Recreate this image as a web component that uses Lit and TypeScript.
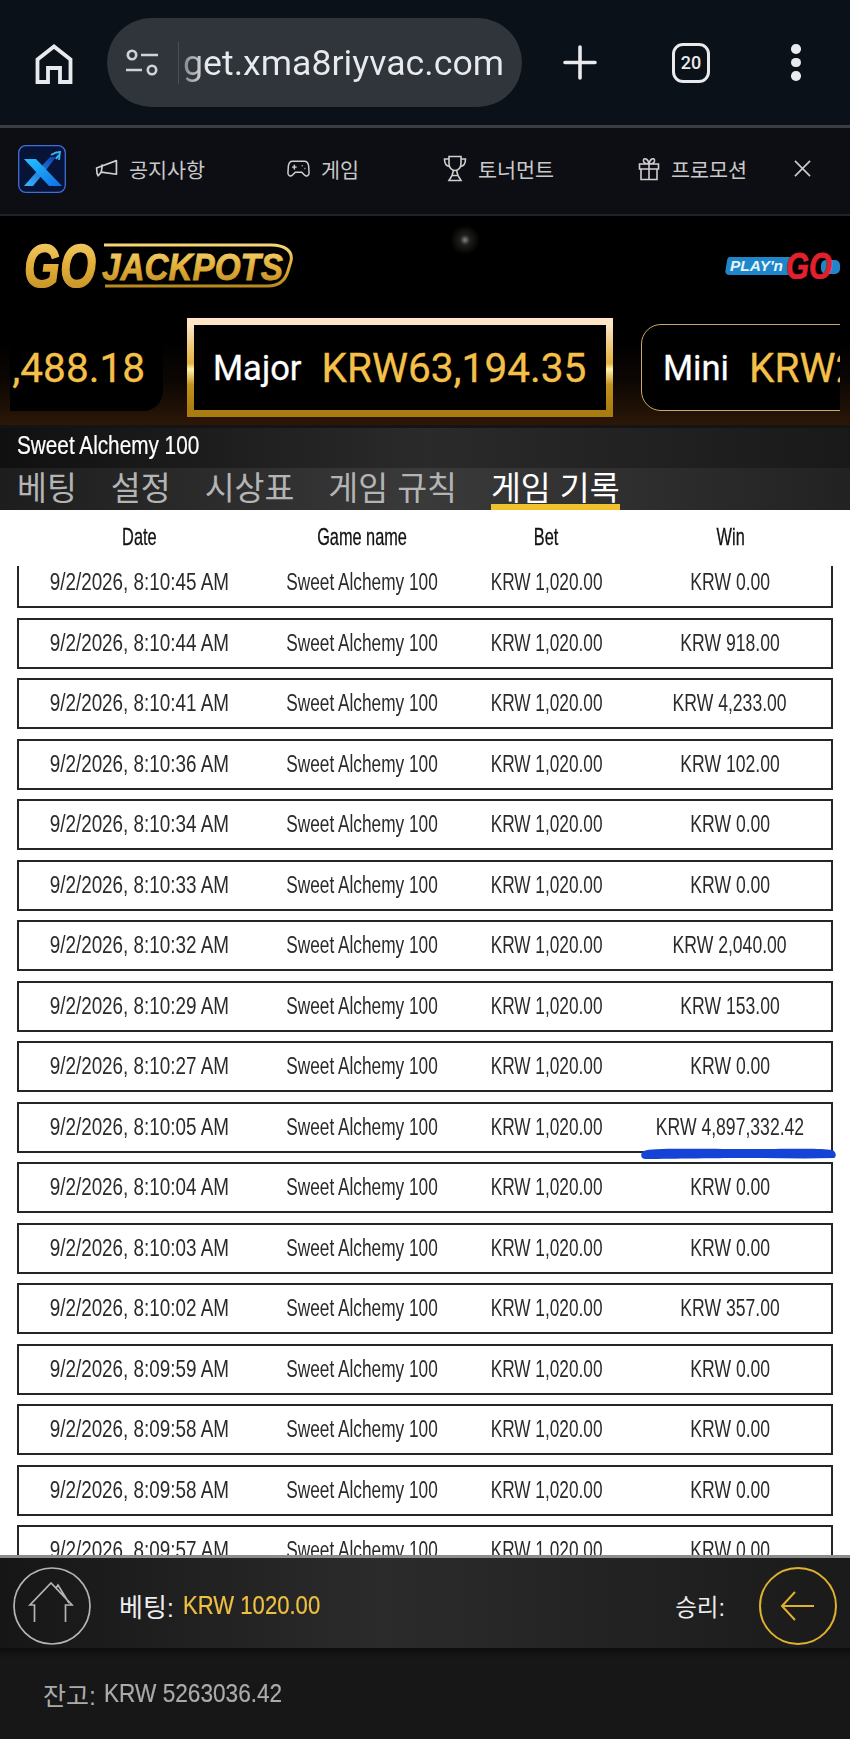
import { LitElement, html, css, svg } from 'lit';
import { customElement } from 'lit/decorators.js';

const BET = "KRW 1,020.00";
const GAME = "Sweet Alchemy 100";

const ROWS = [
  ["9/2/2026, 8:10:45 AM", "KRW 0.00"],
  ["9/2/2026, 8:10:44 AM", "KRW 918.00"],
  ["9/2/2026, 8:10:41 AM", "KRW 4,233.00"],
  ["9/2/2026, 8:10:36 AM", "KRW 102.00"],
  ["9/2/2026, 8:10:34 AM", "KRW 0.00"],
  ["9/2/2026, 8:10:33 AM", "KRW 0.00"],
  ["9/2/2026, 8:10:32 AM", "KRW 2,040.00"],
  ["9/2/2026, 8:10:29 AM", "KRW 153.00"],
  ["9/2/2026, 8:10:27 AM", "KRW 0.00"],
  ["9/2/2026, 8:10:05 AM", "KRW 4,897,332.42"],
  ["9/2/2026, 8:10:04 AM", "KRW 0.00"],
  ["9/2/2026, 8:10:03 AM", "KRW 0.00"],
  ["9/2/2026, 8:10:02 AM", "KRW 357.00"],
  ["9/2/2026, 8:09:59 AM", "KRW 0.00"],
  ["9/2/2026, 8:09:58 AM", "KRW 0.00"],
  ["9/2/2026, 8:09:58 AM", "KRW 0.00"],
  ["9/2/2026, 8:09:57 AM", "KRW 0.00"],
];

const HOME = svg`<svg class="i-home" viewBox="0 0 38 40" fill="none" stroke="#e8eaed" stroke-width="3.800"><path d="M2.500 38V15.500L19 2.500l16.500 13V38H25V24H13v14z"/></svg>`;
const TUNE = svg`<svg class="i-tune" viewBox="0 0 32 27" fill="none" stroke="#cfd2d6" stroke-width="2.600"><circle cx="6" cy="6" r="4.200"/><path d="M15 6h17M0 21h16"/><circle cx="26" cy="21" r="4.200"/></svg>`;
const PLUS = svg`<svg class="i-plus" viewBox="0 0 34 35" stroke="#e8eaed" stroke-width="3.600" stroke-linecap="round"><path d="M17 2v31M2 17.500h30"/></svg>`;

const MEGAPHONE = svg`<svg class="i-nav" viewBox="0 0 22 20" fill="none" stroke="#cfcfcf" stroke-width="1.600" stroke-linejoin="round"><path d="M20.500 2.500v13L6 13.500 3 17l-1-2-.5-5.500z"/><path d="M6 13.500 7 6"/></svg>`;
const PAD = svg`<svg class="i-nav" viewBox="0 0 25 20" fill="none" stroke="#cfcfcf" stroke-width="1.600"><path d="M6 2h13c3 0 4 2 4.500 5l.5 8c0 3-3 4-5 2l-3-3H9l-3 3c-2 2-5 1-5-2l.5-8C2 4 3 2 6 2z"/><path d="M5.500 8.500h5M8 6v5M16 7h1M19 10h1"/></svg>`;
const TROPHY = svg`<svg class="i-trophy" viewBox="0 0 24 27" fill="none" stroke="#cfcfcf" stroke-width="1.600"><path d="M6 1.500h12v7c0 4-2.500 7-6 7s-6-3-6-7z"/><path d="M6 4H1.500c0 4 1.500 7 5 7.500M18 4h4.500c0 4-1.500 7-5 7.500M10.500 15.500l-1.500 5h6l-1.500-5M6 25.500h12l-3-5H9z"/></svg>`;
const GIFT = svg`<svg class="i-gift" viewBox="0 0 22 24" fill="none" stroke="#cfcfcf" stroke-width="1.600"><path d="M1.500 7h19v5h-19zM3 12v10.500h16V12M11 7v15.500M11 7C7 7 5 5.500 5.500 3S10 1.500 11 7c1-5.500 5-6.500 5.500-4S15 7 11 7z"/></svg>`;
const CLOSE = svg`<svg class="i-close" viewBox="0 0 18 18" stroke="#c8c8c8" stroke-width="1.800"><path d="M1 1l16 16M17 1L1 17"/></svg>`;

const X_LOGO = svg`<svg class="x-logo" viewBox="0 0 48 48">
  <defs>
    <linearGradient id="xa" x1="0" y1="0" x2="1" y2="1"><stop offset="0" stop-color="#22c3ff"/><stop offset="1" stop-color="#0f6fe8"/></linearGradient>
    <linearGradient id="xb" x1="0" y1="1" x2="1" y2="0"><stop offset="0" stop-color="#38b7ff"/><stop offset="1" stop-color="#0d3fb0"/></linearGradient>
  </defs>
  <rect x=".7" y=".7" width="46.600" height="46.600" rx="7" fill="#071437" stroke="#3d6fd8" stroke-width="1.300"/>
  <path d="M6 41 21 24 32 12h6L25 29 15 41z" fill="url(#xb)"/>
  <path d="M6 14h12l26 27H31z" fill="url(#xa)"/>
  <path d="M33 10c3-2 6-3 9-3l-1 8M38 14c1-2 2-3 3-4" fill="none" stroke="#33b4f5" stroke-width="1.800"/>
</svg>`;

const JACKPOT_LOGO = svg`<svg class="gj-logo" viewBox="0 0 271 45">
  <defs>
    <linearGradient id="gold" x1="0" y1="0" x2="0" y2="1"><stop offset="0" stop-color="#f6d774"/><stop offset=".5" stop-color="#e2ad38"/><stop offset="1" stop-color="#b98a22"/></linearGradient>
  </defs>
  <path d="M81 2h167c14 0 22 6 20 16l-3 10c-3 10-9 15-20 15H68" fill="none" stroke="url(#gold)" stroke-width="3"/>
  <rect x="60" y="39" width="22" height="6" fill="#000"/>
  <text class="gj-go" x="1" y="44" textLength="72" lengthAdjust="spacingAndGlyphs" fill="url(#gold)" stroke="url(#gold)" stroke-width="1.500">GO</text>
  <text class="gj-word" x="79" y="37" textLength="181" lengthAdjust="spacingAndGlyphs" fill="url(#gold)" stroke="url(#gold)" stroke-width=".8">JACKPOTS</text>
</svg>`;

const PLAYNGO = svg`<svg class="png-logo" viewBox="0 0 115 27">
  <rect x="96" y="8" width="19" height="14" rx="5" fill="#1f87c9"/>
  <path d="M5 5h62v18H5C1 23 0 21 .500 18l1.500-9C2.500 6 3 5 5 5z" fill="#1f87c9"/>
  <text class="png-play" x="5" y="19" textLength="53" lengthAdjust="spacingAndGlyphs" fill="#e8f3fa">PLAY'n</text>
  <text class="png-go" x="61" y="26.500" textLength="46" lengthAdjust="spacingAndGlyphs" fill="#e2202e" stroke="#e2202e" stroke-width=".8">GO</text>
</svg>`;

const HOUSE = svg`<svg class="round" viewBox="0 0 78 78" fill="none" stroke="#b4b4b4" stroke-width="1.700"><ellipse cx="39" cy="39" rx="38" ry="38"/><path d="M21.500 55V38H17L38 16l21 22h-6.500v17M43 21l2-3 11 18"/></svg>`;
const BACK = svg`<svg class="round" viewBox="0 0 78 78" fill="none" stroke="#e0b12c" stroke-width="2"><ellipse cx="39" cy="39" rx="38" ry="38"/><path d="M23 39h32M36 25 23 39l13 14"/></svg>`;

const SCRIBBLE = svg`<svg class="scribble" viewBox="0 0 197 11" preserveAspectRatio="none"><path d="M4 3C12 0 40 1 100 1s80-1 92 1c4 1 5 7 2 8-30 1-60 0-90 0S20 11 6 11C0 11 0 5 4 3z" fill="#1443d6"/></svg>`;

@customElement('app-root')
export class AppRoot extends LitElement {
  static styles = css`
:host {
  display: block;
  width: 850px;
  height: 1739px;
  background: #fff;
  font-family: "Liberation Sans", "Noto Sans CJK KR", sans-serif;
  overflow: hidden;
}

.page {
  display: flex;
  flex-direction: column;
  height: 100%;
}

.browser {
  flex: none;
  height: 125px;
  box-sizing: border-box;
  background: #0b1118;
  display: flex;
  align-items: center;
  padding: 0 0 0 35px;
}

.i-home { width: 38px; height: 40px; margin-top: 2px; }

.url {
  width: 415px;
  height: 89px;
  margin: 0 0 0 34px;
  box-sizing: border-box;
  border-radius: 45px;
  background: #30353b;
  display: flex;
  align-items: center;
  padding-left: 19px;
}

.i-tune { width: 32px; height: 27px; flex: none; }

.url-text {
  margin-left: 20px;
  padding-left: 4px;
  border-left: 1px solid #4c5056;
  font: 400 35.700px Roboto, sans-serif;
  background: linear-gradient(90deg, #6f7276 0, #e8eaed 28px);
  -webkit-background-clip: text;
  background-clip: text;
  color: transparent;
  white-space: nowrap;
}

.i-plus { width: 34px; height: 35px; margin-left: 41px; }

.tabs-count {
  width: 38px;
  height: 40px;
  margin-left: 75px;
  box-sizing: border-box;
  border: 3.500px solid #e8eaed;
  border-radius: 11px;
  display: flex;
  align-items: center;
  justify-content: center;
  font: 500 18px Roboto, sans-serif;
  color: #e8eaed;
}

.dots {
  margin-left: 81px;
  display: flex;
  flex-direction: column;
  gap: 4px;
}

.dots span {
  width: 9.500px;
  height: 9.500px;
  border-radius: 50%;
  background: #e8eaed;
}

.divider {
  flex: none;
  height: 3px;
  background: #3b3d42;
}

.nav {
  flex: none;
  height: 88px;
  box-sizing: border-box;
  border-bottom: 2px solid #202228;
  background: #0d0e13;
  display: flex;
  align-items: center;
  padding: 0 0 5px 18px;
}

.x-logo { width: 48px; height: 48px; margin-right: 29px; flex: none; }

.nav-item {
  display: flex;
  align-items: center;
  gap: 11px;
  color: #c9c9c9;
  font-size: 20.700px;
  white-space: nowrap;
}

.nav-a { width: 192px; }
.nav-b { width: 156px; }
.nav-c { width: 195px; }
.nav-d { width: 156px; }

.i-nav { width: 23px; height: 21px; flex: none; }
.i-trophy { width: 24px; height: 27px; flex: none; }
.i-gift { width: 22px; height: 24px; flex: none; }
.i-close { width: 17px; height: 17px; }

.jackpots {
  flex: none;
  height: 209px;
  box-sizing: border-box;
  padding-top: 27px;
  background:
    radial-gradient(circle at 465px 24px, rgba(215, 215, 205, 0.6) 0, rgba(120, 120, 110, 0.25) 5px, transparent 15px),
    linear-gradient(180deg, #000 0, #000 60%, #0d0703 80%, #2c1707 100%);
}

.logos {
  height: 45px;
  display: flex;
  align-items: center;
  justify-content: space-between;
  padding: 0 10px 0 23px;
}

.gj-logo { width: 271px; height: 45px; }
.png-logo { width: 115px; height: 27px; }

.gj-go { font: italic 700 62px "Liberation Sans", sans-serif; }
.gj-word { font: italic 700 37px "Liberation Sans", sans-serif; }
.png-play { font: italic 700 15px "Liberation Sans", sans-serif; }
.png-go { font: italic 700 37px "Liberation Sans", sans-serif; }

.carousel {
  margin: 30px 10px 0;
  height: 99px;
  display: flex;
  align-items: center;
  overflow: hidden;
  font-family: Roboto, sans-serif;
}

.pill {
  flex: none;
  height: 87px;
  box-sizing: border-box;
  background: #000;
  display: flex;
  align-items: center;
}

.pill-left {
  width: 153px;
  justify-content: flex-end;
  padding-right: 18px;
  border-radius: 0 0 20px 0;
  margin-right: 24px;
}

.pill-right {
  width: 300px;
  margin-left: 28px;
  padding-left: 21px;
  border: 1px solid #c9a868;
  border-radius: 20px;
}

.major {
  flex: none;
  width: 426px;
  height: 99px;
  box-sizing: border-box;
  background: #000;
  border: 7px solid;
  border-image: linear-gradient(180deg, #ffe6c8 0, #e0b23c 45%, #fff2a8 52%, #c2911c 70%, #a97c10 100%) 1;
  display: flex;
  align-items: center;
  padding-left: 19px;
}

.label {
  color: #fff;
  font-size: 34.500px;
  margin-right: 20px;
  white-space: nowrap;
  -webkit-text-stroke: 0.3px #fff;
}

.value {
  color: #f5c04a;
  font-size: 40.600px;
  white-space: nowrap;
  -webkit-text-stroke: 0.3px #f5c04a;
}

.game-title {
  flex: none;
  height: 43px;
  box-sizing: border-box;
  padding: 0 0 5px 17px;
  background: linear-gradient(90deg, #101010, #2a2a2a 50%, #191919);
  border-top: 3px solid #141414;
  display: flex;
  align-items: center;
}

.title-text {
  display: inline-block;
  color: #fff;
  font-size: 25px;
  transform: scaleX(0.83);
  transform-origin: left center;
  white-space: nowrap;
  -webkit-text-stroke: 0.2px #fff;
}

.tabs {
  flex: none;
  height: 42px;
  box-sizing: border-box;
  padding-left: 17px;
  display: flex;
  gap: 34px;
  background: linear-gradient(90deg, #1d1d1d, #3a3a3a 50%, #222);
}

.tab {
  height: 42px;
  box-sizing: border-box;
  color: #b4b4b4;
  font-size: 32.500px;
  line-height: 43px;
  white-space: nowrap;
}

.tab.active {
  color: #fff;
  border-bottom: 6px solid #f2c12e;
}

.table-head {
  flex: none;
  height: 56px;
  box-sizing: border-box;
  padding-bottom: 2px;
  margin: 0 17px;
  display: grid;
  grid-template-columns: 244px 202px 166px 1fr;
  justify-items: center;
  align-items: center;
  background: #fff;
}

.head-cell {
  display: inline-block;
  font-size: 24px;
  color: #111;
  -webkit-text-stroke: 0.3px #111;
  transform: scaleX(0.68);
  white-space: nowrap;
}

.list {
  flex: 1;
  min-height: 0;
  overflow: hidden;
  padding: 0 17px;
  background: #fff;
}

.rows {
  display: flex;
  flex-direction: column;
  gap: 9.500px;
  margin-top: -9px;
}

.row {
  position: relative;
  flex: none;
  height: 51px;
  box-sizing: border-box;
  border: 2px solid #262626;
  display: grid;
  grid-template-columns: 241px 204px 165px 1fr;
  justify-items: center;
  align-items: center;
}

.cell {
  display: inline-block;
  font-size: 23px;
  color: #2a2a2a;
  transform: scaleX(0.75);
  white-space: nowrap;
}

.cell.date {
  transform: scaleX(0.82);
}

.cell.win {
  transform: scaleX(0.765);
}

.scribble {
  position: absolute;
  left: 621px;
  top: 44px;
  width: 197px;
  height: 11px;
}

.bet-bar {
  flex: none;
  height: 93px;
  box-sizing: border-box;
  border-top: 3px solid #8c8c8c;
  background: linear-gradient(90deg, #161616, #2b2b2b 45%, #1a1a1a);
  display: flex;
  align-items: center;
  padding: 5px 13px 0;
  color: #eee;
}

.round { width: 78px; height: 78px; flex: none; }

.bet-label {
  font-size: 26px;
  margin-left: 28px;
  white-space: nowrap;
}

.bet-value {
  display: inline-block;
  font-size: 26px;
  color: #f0c040;
  margin-left: 9px;
  transform: scaleX(0.85);
  transform-origin: left center;
  white-space: nowrap;
  -webkit-text-stroke: 0.2px #f0c040;
}

.win-label {
  margin-left: auto;
  margin-right: 34px;
  font-size: 23.500px;
  white-space: nowrap;
}

.balance {
  flex: none;
  height: 91px;
  display: flex;
  align-items: center;
  padding-left: 43px;
  background: linear-gradient(180deg, #0e0e0e 0, #171717 12%, #171717 100%);
  color: #ababab;
  font-size: 25px;
}

.bal-value {
  display: inline-block;
  margin-left: 8px;
  transform: scaleX(0.905);
  transform-origin: left center;
  white-space: nowrap;
  -webkit-text-stroke: 0.2px #ababab;
}
  `;

  render() {
    return html`
      <div class="page">
        <div class="browser">
          ${HOME}
          <div class="url">${TUNE}<span class="url-text">get.xma8riyvac.com</span></div>
          ${PLUS}
          <div class="tabs-count">20</div>
          <div class="dots"><span></span><span></span><span></span></div>
        </div>
        <div class="divider"></div>

        <div class="nav">
          ${X_LOGO}
          <div class="nav-item nav-a">${MEGAPHONE}공지사항</div>
          <div class="nav-item nav-b">${PAD}게임</div>
          <div class="nav-item nav-c">${TROPHY}토너먼트</div>
          <div class="nav-item nav-d">${GIFT}프로모션</div>
          ${CLOSE}
        </div>

        <div class="jackpots">
          <div class="logos">${JACKPOT_LOGO}${PLAYNGO}</div>
          <div class="carousel">
            <div class="pill pill-left"><span class="value">,488.18</span></div>
            <div class="major"><span class="label">Major</span><span class="value">KRW63,194.35</span></div>
            <div class="pill pill-right"><span class="label">Mini</span><span class="value">KRW2</span></div>
          </div>
        </div>

        <div class="game-title"><span class="title-text">${GAME}</span></div>
        <div class="tabs">
          <div class="tab">베팅</div>
          <div class="tab">설정</div>
          <div class="tab">시상표</div>
          <div class="tab">게임 규칙</div>
          <div class="tab active">게임 기록</div>
        </div>

        <div class="table-head">
          <span class="head-cell">Date</span>
          <span class="head-cell">Game name</span>
          <span class="head-cell">Bet</span>
          <span class="head-cell">Win</span>
        </div>

        <div class="list">
          <div class="rows">
            ${ROWS.map((r, i) => html`
              <div class="row">
                <span class="cell date">${r[0]}</span>
                <span class="cell">${GAME}</span>
                <span class="cell">${BET}</span>
                <span class="cell win">${r[1]}</span>
                ${i === 9 ? SCRIBBLE : ''}
              </div>
            `)}
          </div>
        </div>

        <div class="bet-bar">
          ${HOUSE}
          <span class="bet-label">베팅:</span>
          <span class="bet-value">KRW 1020.00</span>
          <span class="win-label">승리:</span>
          ${BACK}
        </div>
        <div class="balance">잔고:<span class="bal-value">KRW 5263036.42</span></div>
      </div>
    `;
  }
}

declare global {
  interface HTMLElementTagNameMap {
    'app-root': AppRoot;
  }
}
